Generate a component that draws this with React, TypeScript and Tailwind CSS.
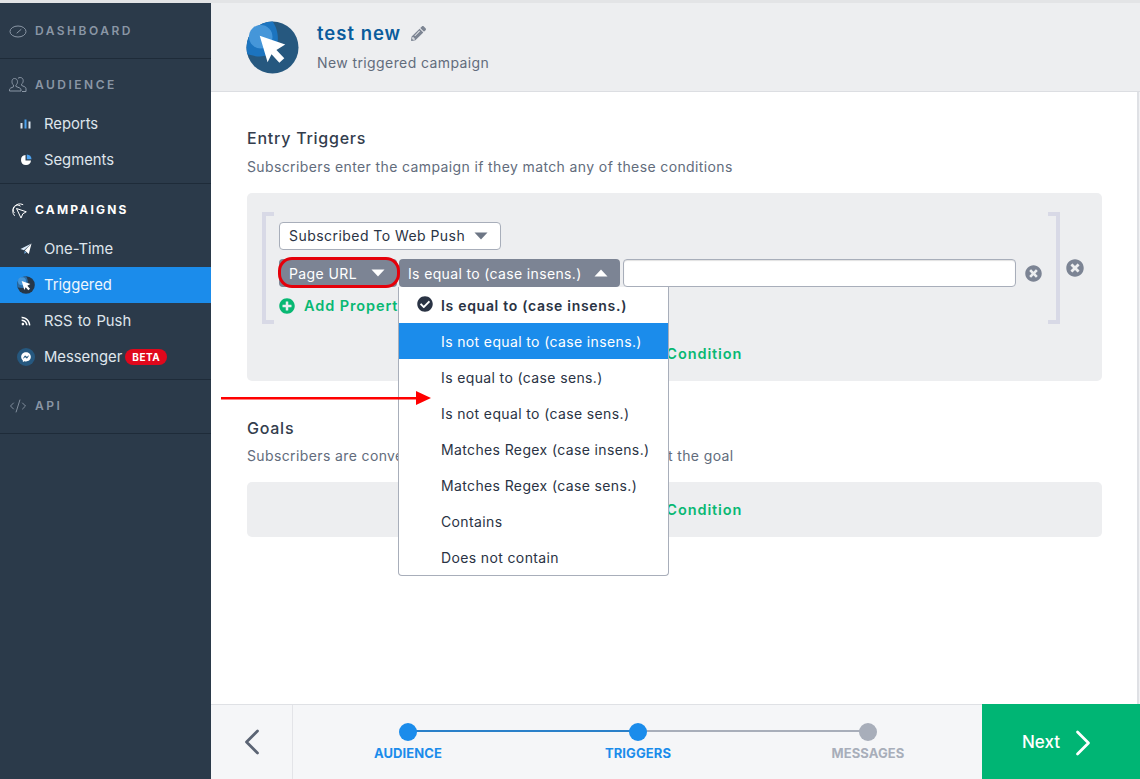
import { ChevronLeft, ChevronRight, CodeXml } from "lucide-react";
import { FaCheckCircle, FaFacebookMessenger, FaPencilAlt, FaPlusCircle, FaRss, FaTimesCircle } from "react-icons/fa";

function Caret({ up = false, className = "" }: { up?: boolean; className?: string }) {
  return (
    <svg viewBox="0 0 14 8" className={`w-[14px] h-2 shrink-0 ${className}`} fill="currentColor">
      <path d={up ? "M7 0.5 L13.5 7.5 H0.5 Z" : "M0.5 0.5 H13.5 L7 7.5 Z"} />
    </svg>
  );
}

function GaugeIcon() {
  return (
    <svg viewBox="0 0 18 14" className="w-[18px] h-[14px]" fill="none" stroke="currentColor" strokeWidth="1">
      <ellipse cx="9" cy="7.5" rx="8" ry="5.5" />
      <path d="M8 9 L12 5.5" strokeLinecap="round" />
    </svg>
  );
}

function PeopleIcon() {
  return (
    <svg viewBox="0 0 18 16" className="w-[18px] h-4" fill="none" stroke="currentColor" strokeWidth="1">
      <path d="M5.5 1.5c2 0 3 1.5 3 3.2 0 1.5-.7 2.8-1.6 3.4v1.3l4 1.7c.8.4 1.1 1 1.1 1.8v1.1H.5v-1.1c0-.8.4-1.4 1.1-1.8l2.9-1.3V8.1C3.6 7.500 3 6.200 3 4.700c0-1.700.600-3.200 2.500-3.200z" />
      <path d="M9 1.300c.6-.5 1.300-.8 2.200-.8 2 0 3 1.500 3 3.200 0 1.500-.7 2.800-1.600 3.400v1.300l3.300 1.500c.7.400 1.100 1 1.100 1.800v2.800h-4" />
    </svg>
  );
}

function CampaignIcon() {
  return (
    <svg viewBox="0 0 18 18" className="w-[18px] h-[18px]" fill="none" stroke="currentColor" strokeWidth="1">
      <path d="M7.500 7.500 L17.300 10.800 L13.800 12.800 L12 17 Z" strokeLinejoin="round" />
      <path d="M5.500 11.800A4.300 4.300 0 0 1 11.500 5.200" />
      <path d="M5.600 14.800A7.200 7.200 0 0 1 14.200 3.700" />
    </svg>
  );
}

function BarsIcon() {
  return (
    <svg viewBox="0 0 12 10" className="w-3 h-[10px]">
      <rect x="0.500" y="4" width="2" height="5.500" fill="#dbe4ee" />
      <rect x="4.500" y="0.500" width="2" height="9" fill="#4da3f0" />
      <rect x="8.500" y="2.500" width="2" height="7" fill="#dbe4ee" />
    </svg>
  );
}

function PieIcon() {
  return (
    <svg viewBox="0 0 12 12" className="w-3 h-3">
      <path d="M5.500 1A5 5 0 1 0 11 6.500H5.500Z" fill="#ffffff" />
      <path d="M6.800 0.500A5 5 0 0 1 11.500 5.200H6.800Z" fill="#4da3f0" />
    </svg>
  );
}

function PlaneIcon() {
  return (
    <svg viewBox="0 0 12 12" className="w-3 h-3">
      <path d="M11.500 0.500 L0.500 6 L4 7.200 Z" fill="#dcecfb" />
      <path d="M11.500 0.500 L4.800 7.500 L8.800 11 Z" fill="#ffffff" />
      <path d="M4.500 8 L4.500 11 L6.300 9.300 Z" fill="#7ab8ef" />
    </svg>
  );
}

function CursorBadge({ className, dark = false }: { className: string; dark?: boolean }) {
  return (
    <svg viewBox="0 0 54 54" className={className}>
      <circle cx="27" cy="27" r="26.500" fill={dark ? "#263748" : "#26587f"} />
      <path d="M27 .5a26.500 26.500 0 0 0-26.500 26.500c0 3 .5 5 1 7 7 2 14 3 20 1 7-3 11-10 11-17 0-6-2-13-5.500-17.500z" fill={dark ? "#2a6ea8" : "#1c74bf"} />
      <circle cx="15" cy="16" r="12" fill="#4596d9" />
      <path d="M14 15 L40 24 L31 29.500 L39 38 L34 42.500 L26 34 L22 42 Z" fill="#ffffff" />
    </svg>
  );
}

function NavItem({ icon, label, active = false, badge = false }: { icon: React.ReactNode; label: string; active?: boolean; badge?: boolean }) {
  return (
    <div className={`h-9 flex items-center text-[14.8px] [word-spacing:1px] ${active ? "bg-[#1b8ceb] text-[#eef6fd]" : "text-[#dfe5ec]"}`}>
      <span className="w-[44px] shrink-0 pl-[17px] flex justify-center pr-[9px] items-center">{icon}</span>
      <span>{label}</span>
      {badge && (
        <span className="ml-[3px] h-4 px-[7px] rounded-full bg-[#e0081c] text-white text-[10px] font-bold tracking-[0.5px] flex items-center">BETA</span>
      )}
    </div>
  );
}

function SectionLabel({ icon, label, strong = false }: { icon: React.ReactNode; label: string; strong?: boolean }) {
  return (
    <div className={`flex items-center h-[18px] pl-[9px] gap-[8px] text-[12px] ${strong ? "text-white font-bold tracking-[2.2px]" : "text-[#8a96a5] font-semibold tracking-[2.5px]"}`}>
      <span className="w-[18px] flex justify-center">{icon}</span>
      <span>{label}</span>
    </div>
  );
}

function AddCondition() {
  return (
    <div className="flex items-center justify-center gap-2 text-[#08b873] font-semibold text-[14.5px] tracking-[0.9px]">
      <FaPlusCircle className="w-4 h-4" />
      <span>Add Condition</span>
    </div>
  );
}

const operators = [
  "Is equal to (case insens.)",
  "Is not equal to (case insens.)",
  "Is equal to (case sens.)",
  "Is not equal to (case sens.)",
  "Matches Regex (case insens.)",
  "Matches Regex (case sens.)",
  "Contains",
  "Does not contain",
];

function Step({ label, done }: { label: string; done: boolean }) {
  return (
    <div className="w-[120px] flex flex-col items-center gap-1">
      <span className={`w-[18px] h-[18px] rounded-full ${done ? "bg-[#1b8ceb]" : "bg-[#a8aeba]"}`} />
      <span className={`text-[13px] font-bold leading-4 tracking-[0.1px] ${done ? "text-[#1b8ceb]" : "text-[#a8aeba]"}`}>{label}</span>
    </div>
  );
}

export default function App() {
  return (
    <div className="relative h-screen w-full overflow-hidden flex flex-col bg-white font-['Inter',sans-serif] text-[#2a3344]">
      <div className="h-[3px] shrink-0 bg-[#e3e4e6]" />
      <div className="flex-1 flex min-h-0">
        <aside className="w-[211px] shrink-0 bg-[#2b3a4a]">
          <div className="h-[56px] border-b border-[#1e2b39] flex items-center">
            <SectionLabel icon={<GaugeIcon />} label="DASHBOARD" />
          </div>
          <div className="pt-[17px] pb-[5px] border-b border-[#1e2b39]">
            <div className="pb-[12px]">
              <SectionLabel icon={<PeopleIcon />} label="AUDIENCE" />
            </div>
            <NavItem icon={<BarsIcon />} label="Reports" />
            <NavItem icon={<PieIcon />} label="Segments" />
          </div>
          <div className="pt-[17px] pb-1 border-b border-[#1e2b39]">
            <div className="pb-[12px]">
              <SectionLabel icon={<CampaignIcon />} label="CAMPAIGNS" strong />
            </div>
            <NavItem icon={<PlaneIcon />} label="One-Time" />
            <NavItem icon={<CursorBadge dark className="w-[18px] h-[18px]" />} label="Triggered" active />
            <NavItem icon={<FaRss className="w-[10px] h-[10px] text-white" />} label="RSS to Push" />
            <NavItem
              icon={
                <span className="w-[18px] h-[18px] shrink-0 rounded-full bg-[#26587f] flex items-center justify-center">
                  <FaFacebookMessenger className="w-[10px] h-[10px] text-white" />
                </span>
              }
              label="Messenger"
              badge
            />
          </div>
          <div className="h-[54px] pb-[2px] border-b border-[#1e2b39] flex items-center">
            <SectionLabel icon={<CodeXml className="w-[18px] h-[18px]" strokeWidth={1.2} />} label="API" />
          </div>
        </aside>

        <main className="flex-1 min-w-0 flex flex-col bg-[#f1f2f4]">
          <header className="h-[89px] shrink-0 bg-[#edeef0] border-b border-[#dcdee2] flex items-center pl-[35px] gap-[18px]">
            <CursorBadge className="w-[53px] h-[53px]" />
            <div>
              <div className="flex items-center gap-[10px] text-[#0a5c9c] text-[18.5px] font-semibold tracking-[1px] leading-6">
                test new
                <FaPencilAlt className="w-[15px] h-[15px] text-[#7d8593]" />
              </div>
              <div className="mt-[8px] text-[14px] leading-5 tracking-[0.4px] text-[#626c7c]">New triggered campaign</div>
            </div>
          </header>

          <div className="flex-1 min-h-0 mr-[1px] bg-white border-r-2 border-[#dfe1e5] pl-[36px] pr-[35px] pt-[34px]">
            <h2 className="text-[16px] leading-6 font-medium tracking-[0.75px] text-[#333d4d]">Entry Triggers</h2>
            <p className="mt-[7px] text-[14px] leading-5 tracking-[0.38px] text-[#626c7c]">Subscribers enter the campaign if they match any of these conditions</p>
            <div className="mt-4 h-[188px] rounded-[5px] bg-[#edeef0] px-[15px] pt-[19px]">
              <div className="flex items-start">
                <div className="w-[12px] h-[112px] shrink-0 border-[4px] border-r-0 border-[#d8d9e6]" />
                <div className="ml-[5px] w-[769px] shrink-0 pt-[10px]">
                  <div className="w-[222px] h-[28px] pb-[1px] rounded-[4px] border border-[#a8aeba] bg-white flex items-center justify-between pl-[9px] pr-[12px] text-[14px] tracking-[0.45px]">
                    Subscribed To Web Push
                    <Caret className="text-[#6d7685]" />
                  </div>
                  <div className="mt-[9px] flex items-center h-[28px]">
                    <div className="w-[118px] shrink-0 h-full rounded-[4px] bg-[#7c8494] text-white flex items-center justify-between pl-[10px] pr-[12px] text-[14px] tracking-[0.4px]">
                      Page URL
                      <Caret />
                    </div>
                    <div className="ml-[2px] w-[221px] shrink-0 h-full rounded-[4px] bg-[#7c8494] text-white flex items-center justify-between pl-[9px] pr-[12px] text-[14px] tracking-[0.35px]">
                      Is equal to (case insens.)
                      <Caret up />
                    </div>
                    <div className="ml-[3px] w-[393px] shrink-0 h-full rounded-[4px] border border-[#a8aeba] bg-white shadow-[inset_0_1px_1px_rgba(0,0,0,0.12)]" />
                    <FaTimesCircle className="ml-[9px] w-[17px] h-[17px] text-[#7c8494]" />
                  </div>
                  <div className="mt-2 flex items-center gap-[9px] text-[#08b873] font-semibold text-[14.5px] tracking-[0.9px]">
                    <FaPlusCircle className="w-4 h-4" />
                    <span>Add Property</span>
                  </div>
                </div>
                <div className="w-[12px] h-[112px] shrink-0 border-[4px] border-l-0 border-[#d8d9e6]" />
                <FaTimesCircle className="ml-[6px] mt-[47px] w-[18px] h-[18px] text-[#7c8494]" />
              </div>
              <div className="mt-[19px]">
                <AddCondition />
              </div>
            </div>

            <h2 className="mt-[35px] text-[16px] leading-6 font-medium tracking-[0.75px] text-[#333d4d]">Goals</h2>
            <p className="mt-[6px] text-[14px] leading-5 tracking-[0.38px] text-[#626c7c]">Subscribers are converted if they match conditions and meet the goal</p>
            <div className="mt-4 h-[55px] rounded-[5px] bg-[#edeef0] flex items-center justify-center">
              <AddCondition />
            </div>
          </div>

          <footer className="h-[75px] shrink-0 bg-[#f5f6f8] border-t border-[#dfe1e5] flex">
            <div className="w-[82px] shrink-0 border-r border-[#e3e4e8] flex items-center justify-center">
              <ChevronLeft className="w-11 h-11 text-[#5b6474]" strokeWidth={1.5} />
            </div>
            <div className="relative flex-1 pl-[55px] pt-[18px]">
              <div className="absolute left-[115px] top-[25px] h-[2px] w-[230px] bg-[#2a80c9]" />
              <div className="absolute left-[345px] top-[25px] h-[2px] w-[230px] bg-[#a8aeba]" />
              <div className="relative z-10 flex gap-[110px]">
                <Step label="AUDIENCE" done />
                <Step label="TRIGGERS" done />
                <Step label="MESSAGES" done={false} />
              </div>
            </div>
            <div className="w-[158px] shrink-0 -mt-[1px] pt-[3px] pl-[40px] bg-[#00b574] text-white flex items-center gap-[1px] text-[17px] font-medium">
              Next
              <ChevronRight className="w-11 h-11" strokeWidth={1.5} />
            </div>
          </footer>
        </main>
      </div>

      {/* open operator menu */}
      <ul className="absolute left-[398px] top-[287px] w-[271px] h-[289px] rounded-b-[4px] border border-t-0 border-[#a8aeba] bg-white text-[14px] tracking-[0.37px]">
        {operators.map((op, i) => (
          <li key={op} className={`relative h-9 flex items-center pl-[42px] ${i === 0 ? "font-semibold tracking-[0.7px]" : ""} ${i === 1 ? "bg-[#1b8ceb] text-white" : ""}`}>
            {i === 0 && <FaCheckCircle className="absolute left-[18px] top-[9px] w-4 h-4" />}
            {op}
          </li>
        ))}
      </ul>

      {/* red annotations */}
      <div className="absolute left-[278px] top-[257px] w-[122px] h-[31px] rounded-[14px] border-[3px] border-[#e5000a] pointer-events-none" />
      <svg className="absolute left-[221px] top-[388px] w-[210px] h-[20px]" viewBox="0 0 210 20">
        <rect x="0" y="9" width="196" height="2.500" fill="#f00" />
        <path d="M195 3 L210 10 L195 17 Z" fill="#f00" />
      </svg>
    </div>
  );
}
